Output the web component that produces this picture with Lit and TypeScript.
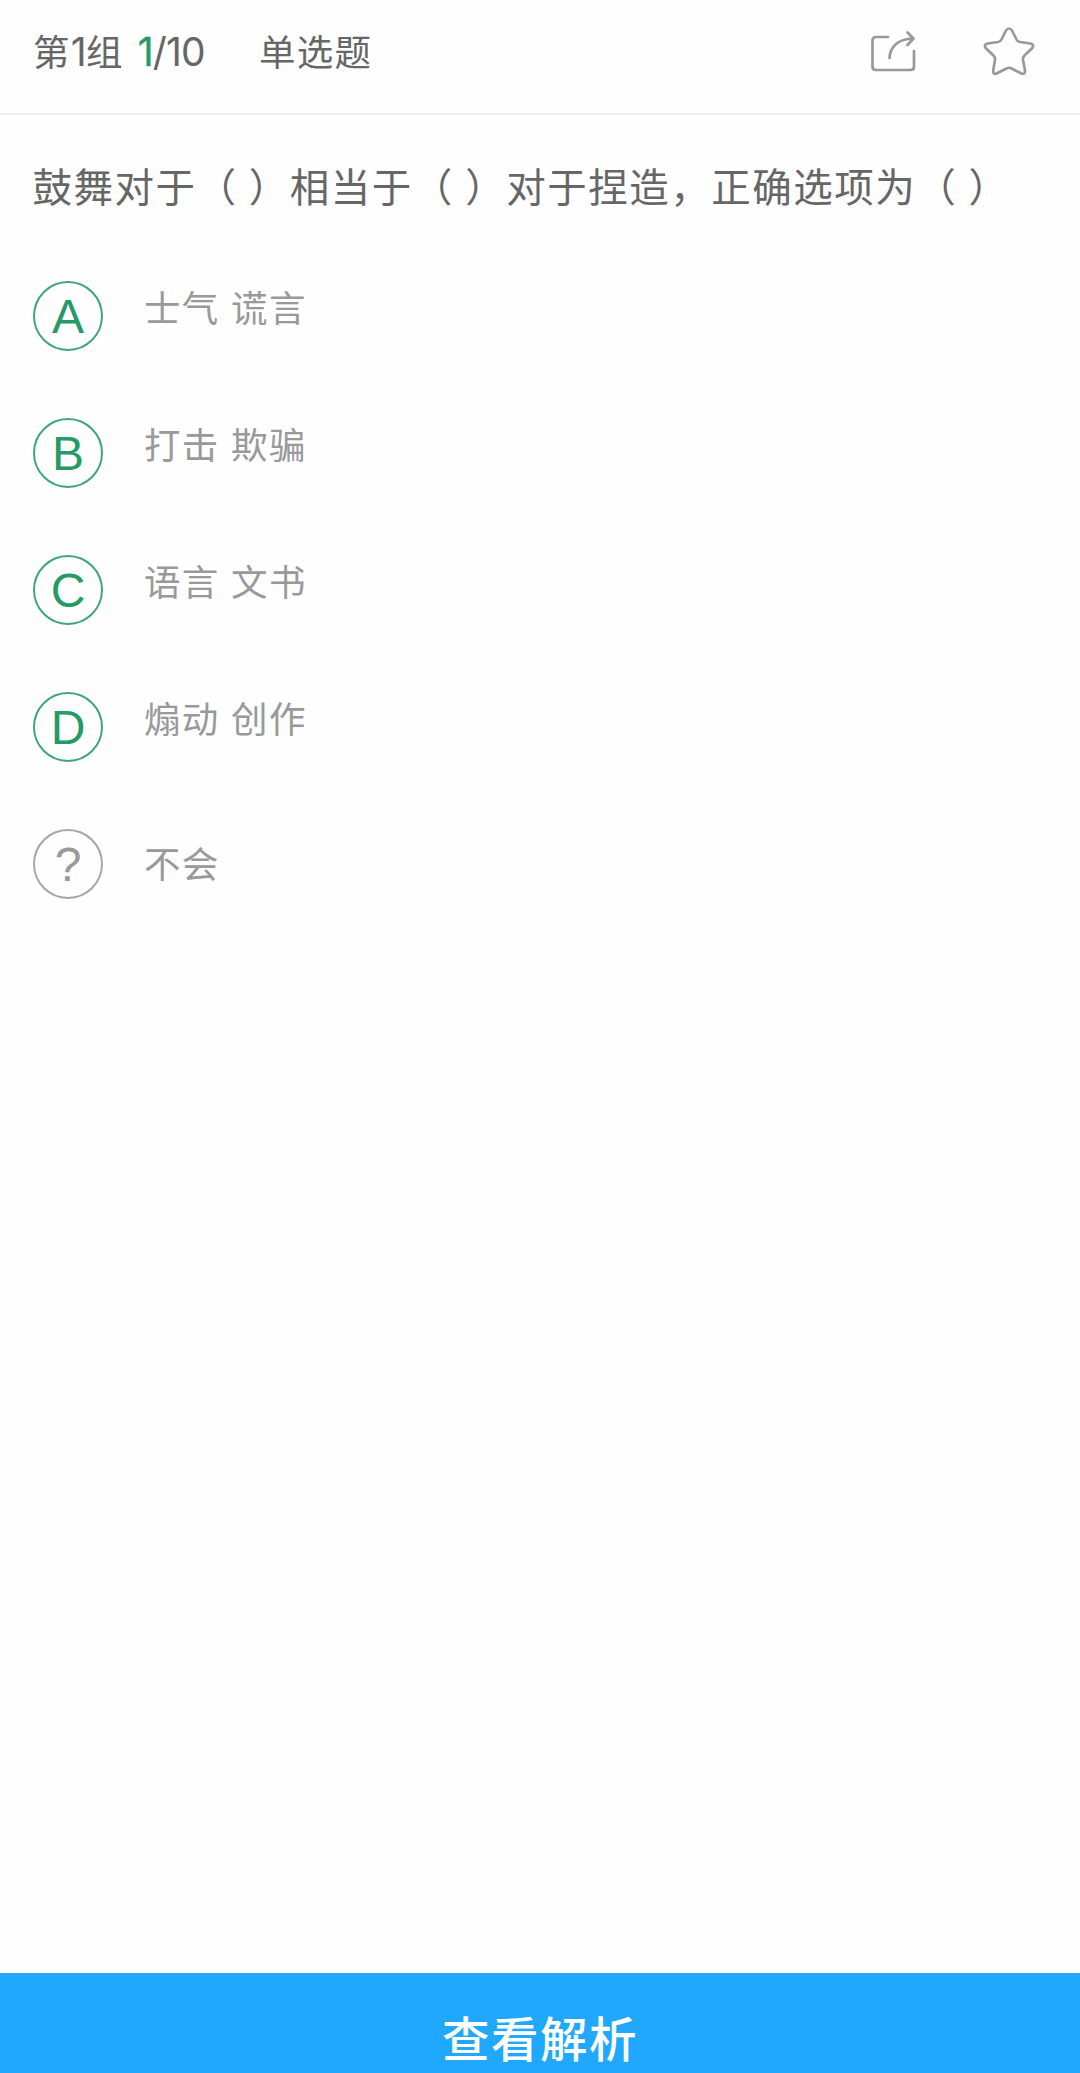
import { LitElement, html, css } from "lit";
import { customElement, property } from "lit/decorators.js";
import { classMap } from "lit/directives/class-map.js";

interface Choice {
  key: string;
  text: string;
  unknown?: boolean;
}

const CHOICES: Choice[] = [
  { key: "A", text: "士气 谎言" },
  { key: "B", text: "打击 欺骗" },
  { key: "C", text: "语言 文书" },
  { key: "D", text: "煽动 创作" },
  { key: "?", text: "不会", unknown: true },
];

@customElement("quiz-choice")
export class QuizChoice extends LitElement {
  static styles = css`
    :host {
      display: flex;
      align-items: center;
      height: 69px;
    }
    .badge {
      box-sizing: border-box;
      width: 70px;
      height: 70px;
      flex: none;
      display: flex;
      align-items: center;
      justify-content: center;
      border: 2px solid #3fa67b;
      border-radius: 50%;
      color: #259a67;
      font: 48px/1 "Liberation Sans", sans-serif;
    }
    .label {
      margin: 0 0 17px 41px;
      color: #999;
      font: 36.5px/54px "Noto Sans CJK SC", sans-serif;
      letter-spacing: 1.3px;
      word-spacing: 2px;
      white-space: nowrap;
    }
    .unknown .label {
      margin-bottom: 2px;
    }
    .row {
      display: flex;
      align-items: center;
    }
    .unknown .badge {
      border-color: #a6a6a6;
      color: #999;
    }
    .glyph {
      padding-top: 2px;
    }
  `;

  @property() key = "";
  @property() text = "";
  @property({ type: Boolean }) unknown = false;

  render() {
    return html`<div class=${classMap({ row: true, unknown: this.unknown })}>
      <span class="badge"><span class="glyph">${this.key}</span></span>
      <span class="label">${this.text}</span>
    </div>`;
  }
}

@customElement("app-root")
export class AppRoot extends LitElement {
  static styles = css`
    :host {
      display: flex;
      flex-direction: column;
      height: 2073px;
      overflow: hidden;
      background: #fefefe;
      color: #666;
      font-family: "Noto Sans CJK SC", sans-serif;
    }
    .header {
      box-sizing: border-box;
      height: 115px;
      flex: none;
      display: flex;
      align-items: flex-start;
      padding: 24px 45px 0 33px;
      border-bottom: 2px solid #f0f0f0;
      font-size: 36.5px;
      line-height: 54px;
      letter-spacing: 1.3px;
      white-space: nowrap;
    }
    .num {
      font-family: Inter, sans-serif;
      font-size: 39px;
      line-height: 50px;
      letter-spacing: -0.8px;
    }
    .progress {
      margin-left: 14px;
      padding-top: 3px;
    }
    .current {
      color: #259a67;
      -webkit-text-stroke: 0.4px currentColor;
    }
    .kind {
      margin-left: 54px;
    }
    .actions {
      display: flex;
      gap: 65px;
      margin-left: auto;
    }
    .icon {
      display: block;
      width: 52px;
      height: 54px;
      fill: none;
      stroke: #999;
      stroke-width: 2.7;
      stroke-linecap: round;
      stroke-linejoin: round;
    }
    .question {
      margin: 0;
      padding: 42px 0 0 32.5px;
      font-size: 39.5px;
      line-height: 56px;
      font-weight: 400;
      letter-spacing: 1.5px;
      word-spacing: 1px;
      white-space: nowrap;
    }
    .choices {
      display: flex;
      flex-direction: column;
      gap: 68px;
      padding: 68px 0 0 33px;
    }
    .submit {
      box-sizing: border-box;
      height: 100px;
      flex: none;
      margin-top: auto;
      padding: 28px 0 0;
      border: 0;
      background: #20a8ff;
      color: #fff;
      font: 500 47.5px/70px "Noto Sans CJK SC", sans-serif;
      letter-spacing: 1.5px;
      text-align: center;
    }
  `;

  render() {
    return html`
      <header class="header">
        <span>第<span class="num">1</span>组</span>
        <span class="num progress"><span class="current">1</span>/10</span>
        <span class="kind">单选题</span>
        <div class="actions">
          <svg class="icon" viewBox="866 24 52 54">
            <path d="M888 37H876Q872.5 37 872.5 40.500V66.500Q872.500 70 876 70H910.500Q914 70 914 66.500V51" />
            <path d="M889.500 58C890 47 898 38.800 913 38.500M907.500 32.500L913.500 38.500L907.500 45" />
          </svg>
          <svg class="icon" viewBox="983 24 52 54">
            <path d="M1006 30.500Q1009 26.500 1012 30.500L1016.500 39.500Q1017.500 41.500 1020 42L1030.500 43.500Q1034.500 44.500 1032.300 48L1024.500 55.500Q1022.500 57.500 1023 60L1025 70.500Q1025 75 1021.500 73.500L1011.500 68.500Q1009 67 1006.500 68.500L996.500 73.500Q993 75 993.200 70.500L995 60Q995.500 57.500 993.500 55.500L985.700 48Q983.500 44.500 987.500 43.500L998 42Q1000.500 41.500 1001.500 39.500Z" />
          </svg>
        </div>
      </header>
      <h1 class="question">鼓舞对于（ ）相当于（ ）对于捏造，正确选项为（ ）</h1>
      <div class="choices">
        ${CHOICES.map(
          (c) => html`<quiz-choice .key=${c.key} .text=${c.text} .unknown=${!!c.unknown}></quiz-choice>`
        )}
      </div>
      <button class="submit">查看解析</button>
    `;
  }
}
